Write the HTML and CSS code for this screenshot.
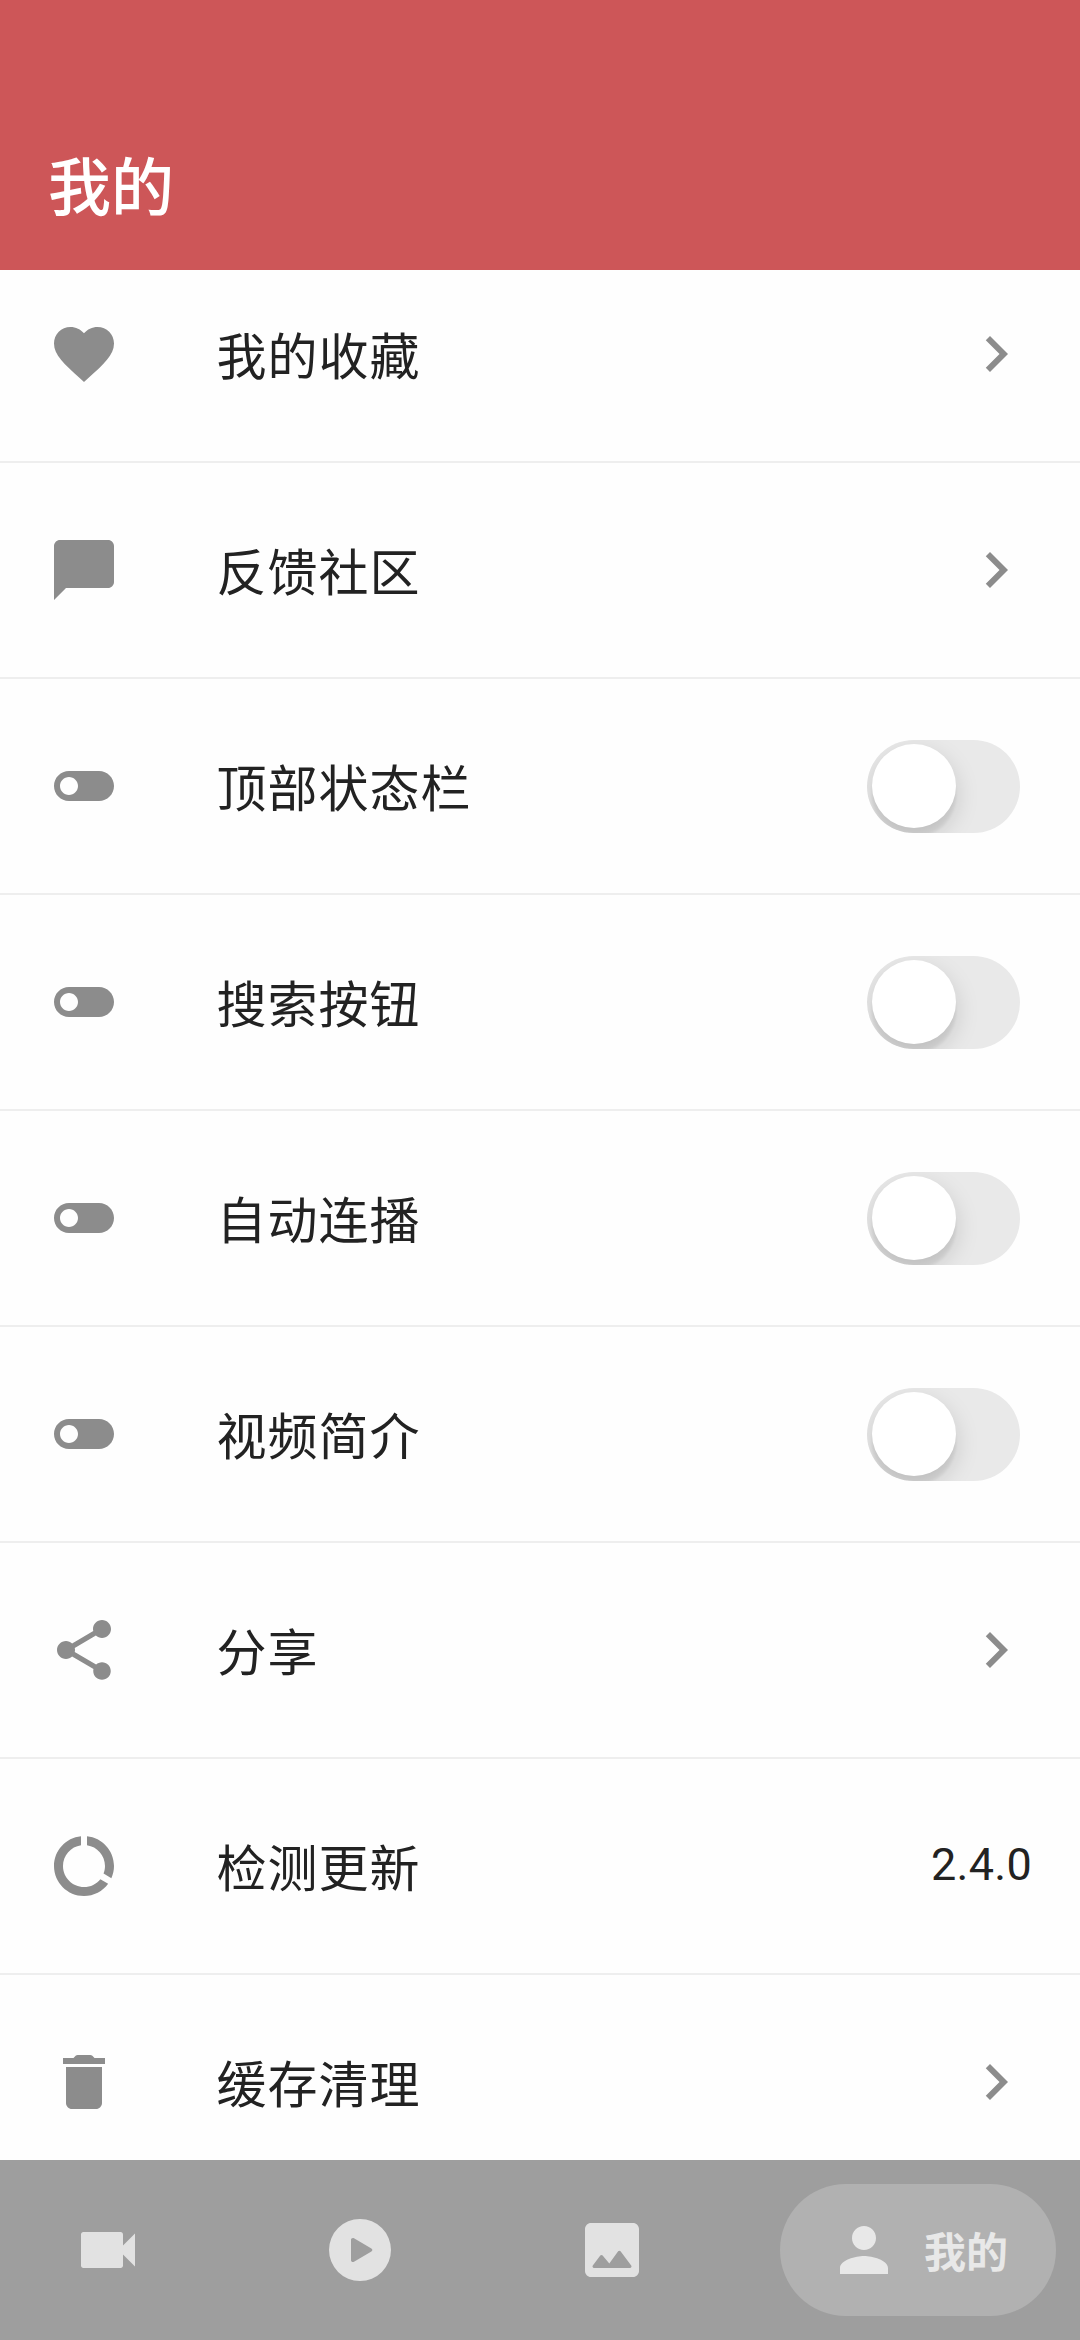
FILE: index.html
```html
<!DOCTYPE html>
<html lang="zh-CN">
<head>
<meta charset="utf-8">
<title>我的</title>
<link rel="stylesheet" href="styles.css">
</head>
<body>
<svg class="sprite" aria-hidden="true">
  <symbol id="chevron" viewBox="0 0 24 24"><path d="M10 6L8.59 7.41 13.17 12l-4.58 4.59L10 18l6-6z"/></symbol>
  <symbol id="toggle" viewBox="0 0 24 24"><path d="M17 7H7c-2.76 0-5 2.24-5 5s2.24 5 5 5h10c2.76 0 5-2.24 5-5s-2.24-5-5-5zM7 15c-1.66 0-3-1.34-3-3s1.34-3 3-3 3 1.34 3 3-1.34 3-3 3z"/></symbol>
</svg>
<div class="screen">
  <header class="header"><h1 class="title">我的</h1></header>
  <main class="list">
    <div class="row">
      <svg class="icon" viewBox="0 0 24 24"><path d="M12 21.35l-1.45-1.32C5.4 15.36 2 12.28 2 8.5 2 5.42 4.42 3 7.5 3c1.74 0 3.41.81 4.5 2.09C13.09 3.81 14.76 3 16.5 3 19.58 3 22 5.42 22 8.5c0 3.78-3.4 6.86-8.55 11.54L12 21.35z"/></svg>
      <span class="label">我的收藏</span>
      <svg class="icon"><use href="#chevron"/></svg>
    </div>
    <div class="row">
      <svg class="icon" viewBox="0 0 24 24"><path d="M20 2H4c-1.1 0-2 .9-2 2v18l4-4h14c1.1 0 2-.9 2-2V4c0-1.1-.9-2-2-2z"/></svg>
      <span class="label">反馈社区</span>
      <svg class="icon"><use href="#chevron"/></svg>
    </div>
    <div class="row">
      <svg class="icon"><use href="#toggle"/></svg>
      <span class="label">顶部状态栏</span>
      <span class="switch"><span class="knob"></span></span>
    </div>
    <div class="row">
      <svg class="icon"><use href="#toggle"/></svg>
      <span class="label">搜索按钮</span>
      <span class="switch"><span class="knob"></span></span>
    </div>
    <div class="row">
      <svg class="icon"><use href="#toggle"/></svg>
      <span class="label">自动连播</span>
      <span class="switch"><span class="knob"></span></span>
    </div>
    <div class="row">
      <svg class="icon"><use href="#toggle"/></svg>
      <span class="label">视频简介</span>
      <span class="switch"><span class="knob"></span></span>
    </div>
    <div class="row">
      <svg class="icon" viewBox="0 0 24 24"><path d="M18 16.08c-.76 0-1.44.3-1.96.77L8.91 12.7c.05-.23.09-.46.09-.7s-.04-.47-.09-.7l7.05-4.11c.54.5 1.25.81 2.04.81 1.66 0 3-1.34 3-3s-1.34-3-3-3-3 1.34-3 3c0 .24.04.47.09.7L8.04 9.81C7.5 9.31 6.79 9 6 9c-1.66 0-3 1.34-3 3s1.34 3 3 3c.79 0 1.5-.31 2.04-.81l7.12 4.16c-.05.21-.08.43-.08.65 0 1.61 1.31 2.92 2.92 2.92s2.92-1.31 2.92-2.92-1.31-2.92-2.92-2.92z"/></svg>
      <span class="label">分享</span>
      <svg class="icon"><use href="#chevron"/></svg>
    </div>
    <div class="row">
      <svg class="icon" viewBox="0 0 24 24"><path d="M13 2.05v3.03c3.39.49 6 3.39 6 6.92 0 .9-.18 1.75-.48 2.54l2.6 1.53c.56-1.24.88-2.62.88-4.07 0-5.18-3.95-9.45-9-9.95zM12 19c-3.87 0-7-3.13-7-7 0-3.53 2.61-6.43 6-6.92V2.05c-5.06.5-9 4.76-9 9.95 0 5.52 4.47 10 9.99 10 3.31 0 6.24-1.61 8.06-4.09l-2.6-1.53C16.17 17.98 14.21 19 12 19z"/></svg>
      <span class="label">检测更新</span>
      <span class="version">2.4.0</span>
    </div>
    <div class="row">
      <svg class="icon" viewBox="0 0 24 24"><path d="M6 19c0 1.1.9 2 2 2h8c1.1 0 2-.9 2-2V7H6v12zM15.5 4l-.71-.71c-.18-.18-.44-.29-.7-.29H9.91c-.26 0-.52.11-.7.29L8.5 4H5v2h14V4z"/></svg>
      <span class="label">缓存清理</span>
      <svg class="icon"><use href="#chevron"/></svg>
    </div>
  </main>
  <nav class="nav">
    <a class="tab"><svg class="tab-icon" viewBox="0 0 24 24"><path d="M17 10.5V6.8c0-.45-.35-.8-.8-.8H3.8c-.45 0-.8.35-.8.8v10.4c0 .45.35.8.8.8h12.4c.45 0 .8-.35.8-.8v-3.7l4 4v-11l-4 4z"/></svg></a>
    <a class="tab"><svg class="tab-icon" viewBox="0 0 24 24"><path fill-rule="evenodd" d="M12 1.67a10.33 10.33 0 1 0 0 20.66a10.33 10.33 0 1 0 0-20.66zM9 8.6c0-.5.55-.78 1-.5l5.8 3.4c.42.27.42.73 0 1L10 15.9c-.45.28-1 0-1-.5z"/></svg></a>
    <a class="tab"><svg class="tab-icon" viewBox="0 0 24 24"><path fill-rule="evenodd" d="M5 3h14c1.1 0 2 .9 2 2v14c0 1.1-.9 2-2 2H5c-1.1 0-2-.9-2-2V5c0-1.1.9-2 2-2zM8.1 13.85L5.6 17.2c-.25.34 0 .8.4.8h12c.42 0 .66-.47.4-.8l-3.55-4.75c-.2-.27-.6-.27-.8 0L11.1 16.5l-2.22-2.67c-.2-.24-.59-.24-.78.02z"/></svg></a>
    <a class="tab active"><svg class="tab-icon" viewBox="0 0 24 24"><path d="M12 12c2.21 0 4-1.79 4-4s-1.79-4-4-4-4 1.79-4 4 1.79 4 4 4zm0 2c-2.67 0-8 1.34-8 4v2h16v-2c0-2.66-5.33-4-8-4z"/></svg><span class="tab-label">我的</span></a>
  </nav>
</div>
</body>
</html>
```

FILE: styles.css
```css
* { box-sizing: border-box; }
body {
  margin: 0;
  background: #fefefe;
  color: #222;
  font-family: Roboto, "Noto Sans CJK SC", sans-serif;
}
.sprite { display: none; }
.screen {
  display: flex;
  flex-direction: column;
  width: 1080px;
  height: 2340px;
  overflow: hidden;
}
.header {
  display: flex;
  align-items: center;
  flex: 0 0 270px;
  padding: 108px 48px 0;
  background: #cd5658;
}
.title {
  margin: 0;
  color: #fff;
  font-size: 63px;
  font-weight: 500;
  line-height: 90px;
}
.list {
  display: flex;
  flex-direction: column;
  justify-content: flex-end;
  flex: 0 0 1890px;
  overflow: hidden;
}
.row {
  display: flex;
  align-items: center;
  flex: 0 0 216px;
  padding: 0 48px;
  border-bottom: 2px solid #eee;
}
/* The first and last rows are partly scrolled out of the list. */
.row:first-child {
  flex-basis: 193px;
  padding-bottom: 23px;
}
.row:last-child {
  flex-basis: 185px;
  padding-top: 29px;
  border-bottom: 0;
}
.icon {
  flex: none;
  width: 72px;
  height: 72px;
  fill: #8c8c8c;
}
.label {
  flex: 1;
  margin-left: 96.5px;
  padding-top: 7px;
  font-size: 50px;
  letter-spacing: 1px;
  line-height: 72px;
}
.switch {
  flex: none;
  width: 153px;
  height: 93px;
  margin-right: 12px;
  padding: 4.5px;
  border-radius: 46.5px;
  background: #e9e9e9;
  overflow: hidden;
}
.knob {
  display: block;
  width: 84px;
  height: 84px;
  border-radius: 50%;
  background: #fff;
  box-shadow: 0 9px 24px rgba(0, 0, 0, .15), 0 9px 3px rgba(0, 0, 0, .06);
}
.version {
  padding-bottom: 3px;
  font-size: 45px;
  letter-spacing: .3px;
  line-height: 60px;
}
.nav {
  display: flex;
  justify-content: space-between;
  flex: 0 0 180px;
  padding: 24px;
  background: #9e9e9e;
}
.tab {
  display: flex;
  align-items: center;
  height: 132px;
  padding: 0 48px;
  border-radius: 66px;
  fill: #e2e2e2;
}
.tab-icon {
  width: 72px;
  height: 72px;
}
.tab.active {
  background: #b1b1b1;
  color: #e8e8e8;
  fill: #e8e8e8;
}
.tab-label {
  margin-left: 24px;
  padding-top: 7px;
  font-size: 42px;
  font-weight: 700;
  line-height: 60px;
}
```
